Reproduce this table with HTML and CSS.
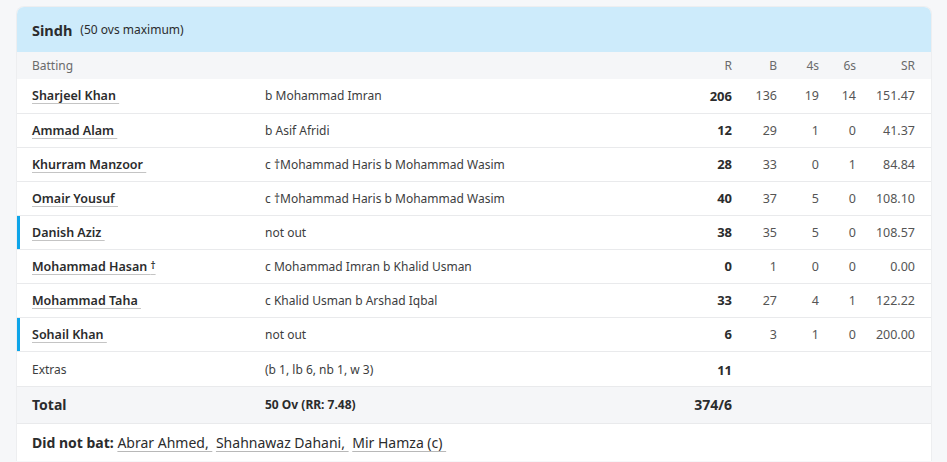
FILE: index.html
```html
<!DOCTYPE html>
<html>
<head>
<meta charset="utf-8">
<link rel="stylesheet" href="styles.css">
</head>
<body>
<div class="card">
  <div class="head"><span class="team">Sindh</span><span class="ovs">(50 ovs maximum)</span></div>
  <table class="score">
    <colgroup>
      <col class="c-name"><col class="c-dis"><col class="c-r"><col class="c-b"><col class="c-4"><col class="c-6"><col class="c-sr">
    </colgroup>
    <thead>
      <tr class="thr"><th class="l">Batting</th><th></th><th>R</th><th>B</th><th>4s</th><th>6s</th><th class="last">SR</th></tr>
    </thead>
    <tbody>
      <tr><td class="nm"><a>Sharjeel Khan&nbsp;</a></td><td class="ds">b Mohammad Imran</td><td class="r">206</td><td>136</td><td>19</td><td>14</td><td class="last">151.47</td></tr>
      <tr><td class="nm"><a>Ammad Alam&nbsp;</a></td><td class="ds">b Asif Afridi</td><td class="r">12</td><td>29</td><td>1</td><td>0</td><td class="last">41.37</td></tr>
      <tr><td class="nm"><a>Khurram Manzoor&nbsp;</a></td><td class="ds">c †Mohammad Haris b Mohammad Wasim</td><td class="r">28</td><td>33</td><td>0</td><td>1</td><td class="last">84.84</td></tr>
      <tr><td class="nm"><a>Omair Yousuf&nbsp;</a></td><td class="ds">c †Mohammad Haris b Mohammad Wasim</td><td class="r">40</td><td>37</td><td>5</td><td>0</td><td class="last">108.10</td></tr>
      <tr class="live"><td class="nm"><a>Danish Aziz&nbsp;</a></td><td class="ds">not out</td><td class="r">38</td><td>35</td><td>5</td><td>0</td><td class="last">108.57</td></tr>
      <tr><td class="nm"><a>Mohammad Hasan <span class="dg">†</span></a></td><td class="ds">c Mohammad Imran b Khalid Usman</td><td class="r">0</td><td>1</td><td>0</td><td>0</td><td class="last">0.00</td></tr>
      <tr><td class="nm"><a>Mohammad Taha&nbsp;</a></td><td class="ds">c Khalid Usman b Arshad Iqbal</td><td class="r">33</td><td>27</td><td>4</td><td>1</td><td class="last">122.22</td></tr>
      <tr class="live"><td class="nm"><a>Sohail Khan&nbsp;</a></td><td class="ds">not out</td><td class="r">6</td><td>3</td><td>1</td><td>0</td><td class="last">200.00</td></tr>
      <tr class="extras"><td class="nm">Extras</td><td class="ds">(b 1, lb 6, nb 1, w 3)</td><td class="r">11</td><td></td><td></td><td></td><td class="last"></td></tr>
      <tr class="total"><td class="nm">Total</td><td class="ds">50 Ov (RR: 7.48)</td><td class="r">374/6</td><td></td><td></td><td></td><td class="last"></td></tr>
    </tbody>
  </table>
  <div class="dnb"><b>Did not bat:</b> <a>Abrar Ahmed,&nbsp;</a> <a>Shahnawaz Dahani,&nbsp;</a> <a>Mir Hamza (c)&nbsp;</a></div>
</div>
</body>
</html>
```
FILE: styles.css
```css
html, body { margin: 0; padding: 0; }
body {
  background: #f6f7f9;
  font-family: "Noto Sans", "Open Sans", sans-serif;
  color: #2b2c2d;
  padding: 6px 15px 0 16px;
  height: 462px;
  box-sizing: border-box;
  overflow: hidden;
}
.card {
  width: 916px;
  background: #fff;
  border-radius: 8px 8px 0 0;
  border: 1px solid #edeef0;
  border-bottom: none;
  box-sizing: border-box;
  overflow: hidden;
}
.head {
  height: 45px;
  background: #cdebfb;
  display: flex;
  align-items: center;
  padding-left: 15px;
  box-sizing: border-box;
}
.team { font-weight: 700; font-size: 14.5px; color: #2b2c2d; }
.ovs { font-size: 12px; margin-left: 8px; color: #2b2c2d; }
.score { width: 914px; border-collapse: collapse; table-layout: fixed; }
.c-name { width: 248px; }
.c-dis { width: 425px; }
.c-r { width: 42px; }
.c-b { width: 45px; }
.c-4 { width: 42px; }
.c-6 { width: 37px; }
.c-sr { width: 75px; }
th, td { padding: 0; text-align: right; white-space: nowrap; }
.thr { background: #f5f6f8; height: 27px; }
th { font-weight: 400; font-size: 12px; color: #6a6b6c; }
th.l { text-align: left; padding-left: 15px; }
.last { padding-right: 16px; }
tbody tr { height: 34px; border-top: 1px solid #e9eaec; }
tbody tr:first-child { border-top: none; }
td { font-size: 12.5px; color: #555; }
td.nm { text-align: left; padding-left: 15px; font-size: 12.5px; font-weight: 600; color: #2b2c2d; }
td.nm a { text-decoration: underline; text-decoration-color: #c4c4c4; text-underline-offset: 3px; }
.dg { font-size: 10px; vertical-align: 2px; }
td.ds { text-align: left; font-size: 12px; color: #3c3d3e; }
td.r { font-weight: 700; font-size: 13px; color: #2b2c2d; }
tr.live td.nm { box-shadow: inset 3px 0 0 #0ea5e9; }
tr.extras { height: 35px; }
tr.extras td { padding-top: 2px; }
tr.extras td.nm { font-weight: 400; font-size: 12px; color: #3c3d3e; }
tr.total { background: #f5f6f8; height: 37px; }
tr.total td.nm { font-size: 14px; font-weight: 700; color: #2b2c2d; }
tr.total td.ds { font-weight: 700; color: #2b2c2d; }
tr.total td.r { font-size: 14px; }
.dnb {
  border-top: 1px solid #e9eaec;
  padding: 9px 15px;
  font-size: 14px;
  color: #2b2c2d;
}
.dnb b { font-weight: 700; }
.dnb a { text-decoration: underline; text-decoration-color: #b8b8b8; text-underline-offset: 3px; }
```
